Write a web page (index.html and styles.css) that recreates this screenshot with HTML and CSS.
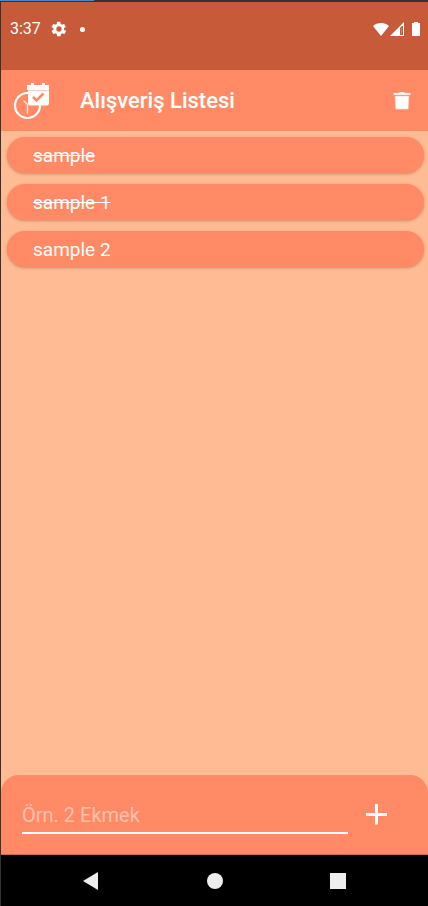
FILE: index.html
```html
<!DOCTYPE html>
<html lang="tr">
<head>
<meta charset="utf-8">
<meta name="viewport" content="width=device-width, initial-scale=1">
<title>Alışveriş Listesi</title>
<link rel="stylesheet" href="styles.css">
</head>
<body>
<div class="window-edge"></div>
<div class="screen">
  <div class="status">
    <div class="status-left">
      <span class="clock">3:37</span>
      <svg class="gear" width="16" height="16" viewBox="0 0 24 24" aria-hidden="true"><path fill="#fff" fill-rule="evenodd" d="M19.4 13a7.500 7.500 0 0 0 0-2l2.400-1.800a.6.6 0 0 0 .1-.8l-2.200-3.800a.6.6 0 0 0-.7-.2l-2.700 1.100a8 8 0 0 0-1.900-1.100L14 1.500a.6.6 0 0 0-.6-.5h-3.800a.6.6 0 0 0-.6.500l-.4 2.900a8 8 0 0 0-1.900 1.100L4 4.400a.6.6 0 0 0-.7.2L1.200 8.400a.6.6 0 0 0 .1.800L3.700 11a7.500 7.500 0 0 0 0 2l-2.400 1.800a.6.6 0 0 0-.1.800l2.200 3.800c.1.200.4.300.7.200l2.700-1.100a8 8 0 0 0 1.900 1.100l.4 2.900c0 .3.300.5.600.5h4.200c.3 0 .5-.2.600-.5l.4-2.900a8 8 0 0 0 1.900-1.100l2.700 1.100c.3.100.6 0 .7-.2l2.200-3.800a.6.6 0 0 0-.1-.8zM12 8a4 4 0 1 1-.01 8A4 4 0 0 1 12 8z"/></svg>
      <span class="dot"></span>
    </div>
    <svg width="48" height="16" viewBox="0 0 48 16" aria-hidden="true">
      <path fill="#fff" d="M0 5C2 3 5 2 8 2s6 1 8 3L8 15z"/>
      <path fill="#fff" d="M17 15 31 1v14z"/>
      <path fill="#c75b39" d="M27 7l2-2h1v9h-3z"/>
      <path fill="#fff" fill-opacity=".25" d="M28 7h1v6h-1z"/>
      <path fill="#fff" d="M41 1h4v1h2v13h-8V2h2z"/>
    </svg>
  </div>
  <header class="bar">
    <svg class="logo" width="38" height="38" viewBox="0 0 38 38" aria-hidden="true">
      <circle cx="14.500" cy="23.500" r="12.500" fill="none" stroke="#fff" stroke-width="2.200"/>
      <path d="M14.500 22v9M11 19l3 3" fill="none" stroke="#fff" stroke-opacity=".75" stroke-width="1.500" stroke-linecap="round"/>
      <path fill="#fff" d="M14 3h4V1.500q1.500-1.500 3 0V3h8V1.500q1.500-1.500 3 0V3h4v5H14zM15 9h21v12q0 2.500-2.500 2.500h-16Q15 23.500 15 21z"/>
      <path fill="#fff" fill-opacity=".6" d="M15 8h21v1H15z"/>
      <path d="m20 15 3.500 3.500 7-7" fill="none" stroke="#ff8a65" stroke-width="2.600"/>
    </svg>
    <h1>Alışveriş Listesi</h1>
    <button class="trash" type="button" aria-label="Listeyi sil">
      <svg width="18" height="18" viewBox="0 0 18 18" aria-hidden="true"><path fill="#fff" stroke="#f4b29d" stroke-width=".5" d="M.5 1h5.500l1-1h4l1 1h5.500v2H.5z"/><path fill="#fff" stroke="#f4b29d" stroke-width=".5" d="M2 4h14l-.5 12.200q-.1 1-1.200 1H3.700q-1.100 0-1.200-1z"/></svg>
    </button>
  </header>
  <main>
    <ul class="list">
      <li class="done">sample</li>
      <li class="done">sample 1</li>
      <li>sample 2</li>
    </ul>
  </main>
  <form class="entry">
    <input type="text" aria-label="Yeni ürün" placeholder="Örn. 2 Ekmek">
    <button type="button" aria-label="Ekle">
      <svg width="22" height="22" viewBox="0 0 22 22" aria-hidden="true"><path d="M10.500 0v20.500M0 10.500h21" stroke="#fff" stroke-width="3"/></svg>
    </button>
  </form>
  <nav class="system">
    <button type="button" aria-label="Geri"><svg width="18" height="18" viewBox="0 0 18 18"><path fill="#eee" d="M15 0v18L0 9z"/></svg></button>
    <button type="button" aria-label="Ana ekran"><svg width="18" height="18" viewBox="0 0 18 18"><circle cx="9" cy="9" r="8" fill="#eee"/></svg></button>
    <button type="button" aria-label="Son uygulamalar"><svg width="18" height="18" viewBox="0 0 18 18"><path fill="#eee" d="M1 1h16v16H1z"/></svg></button>
  </nav>
</div>
</body>
</html>
```
FILE: styles.css
```css
* { box-sizing: border-box; }

body {
  margin: 0;
  min-height: 100vh;
  display: flex;
  flex-direction: column;
  background: #333;
  color: #fff;
  font-family: Roboto, sans-serif;
}

button {
  display: flex;
  padding: 0;
  border: 0;
  background: none;
  cursor: pointer;
}

.window-edge {
  width: 22%;
  height: 1px;
  margin-bottom: 1px;
  background: #4a88c7;
}

.screen {
  flex: 1;
  display: flex;
  flex-direction: column;
  margin-left: 1px;
  background: #ffbb93;
}

.status {
  display: flex;
  justify-content: space-between;
  align-items: flex-start;
  height: 68px;
  padding: 19px 7px 0 9px;
  background: #c75b39;
}

.status-left {
  display: flex;
  align-items: center;
  height: 16px;
}

.clock {
  font-size: 16px;
  line-height: 18px;
}

.gear { margin-left: 10px; }

.dot {
  width: 5px;
  height: 5px;
  margin-left: 13px;
  border-radius: 50%;
  background: #fff;
}

.bar {
  display: flex;
  align-items: center;
  height: 61px;
  padding: 0 17px 0 12px;
  background: #ff8a65;
}

.bar h1 {
  flex: 1;
  margin: 0 0 0 29px;
  font-size: 22px;
  line-height: 26px;
  font-weight: 500;
}

main { flex: 1; }

.list {
  display: grid;
  gap: 11px;
  margin: 0;
  padding: 6px 4px 6px 6px;
  list-style: none;
}

.list li {
  height: 36px;
  padding-left: 26px;
  border-radius: 18px;
  background: #ff8a65;
  box-shadow: 0 1px 3px rgba(110, 50, 20, 0.35);
  font-size: 19px;
  line-height: 37px;
}

.list .done { text-decoration: line-through; }

.entry {
  display: flex;
  align-items: center;
  gap: 18px;
  height: 80px;
  padding: 0 40px 0 21px;
  border-bottom: 1px solid #c96c50;
  border-radius: 18px 18px 0 0;
  background: #ff8a65;
}

.entry input {
  flex: 1;
  min-width: 0;
  height: 38px;
  padding: 2px 0 0;
  border: 0;
  border-bottom: 2px solid #fff;
  border-radius: 0;
  outline: 0;
  background: none;
  color: #fff;
  font-family: inherit;
  font-size: 20px;
}

.entry input::placeholder { color: #ffc1ad; opacity: 1; }

.system {
  display: flex;
  justify-content: center;
  align-items: center;
  gap: 105px;
  height: 51px;
  background: #000;
}
```
